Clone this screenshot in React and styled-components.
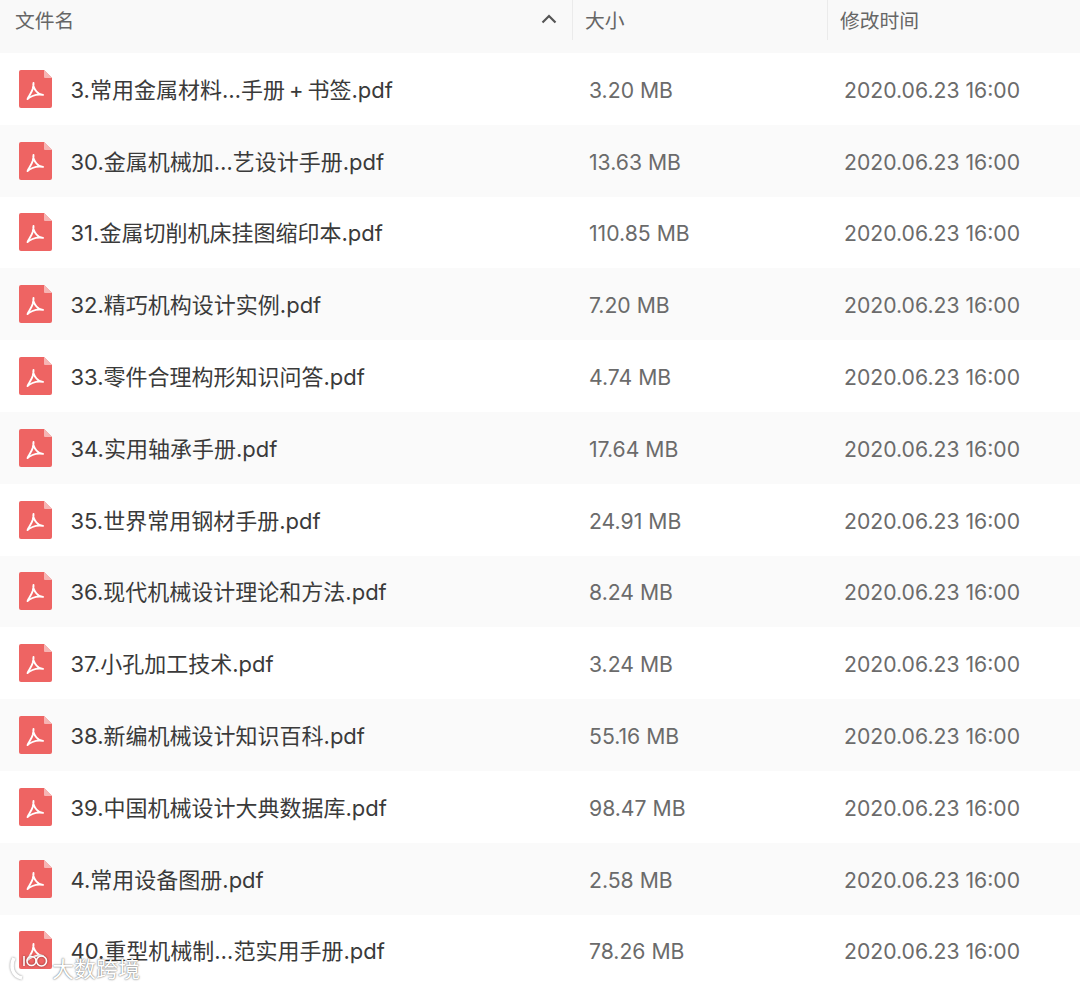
import React from "react"
import styled, { createGlobalStyle } from "styled-components"

const files = [
    ["3.常用金属材料…手册\u2009+\u2009书签.pdf", "3.20 MB"],
    ["30.金属机械加…艺设计手册.pdf", "13.63 MB"],
    ["31.金属切削机床挂图缩印本.pdf", "110.85 MB"],
    ["32.精巧机构设计实例.pdf", "7.20 MB"],
    ["33.零件合理构形知识问答.pdf", "4.74 MB"],
    ["34.实用轴承手册.pdf", "17.64 MB"],
    ["35.世界常用钢材手册.pdf", "24.91 MB"],
    ["36.现代机械设计理论和方法.pdf", "8.24 MB"],
    ["37.小孔加工技术.pdf", "3.24 MB"],
    ["38.新编机械设计知识百科.pdf", "55.16 MB"],
    ["39.中国机械设计大典数据库.pdf", "98.47 MB"],
    ["4.常用设备图册.pdf", "2.58 MB"],
    ["40.重型机械制…范实用手册.pdf", "78.26 MB"],
]

function PdfIcon() {
    return (
        <svg width="33" height="38" viewBox="0 0 33 38">
            <path d="M2 0H25L33 8V36a2 2 0 0 1-2 2H2a2 2 0 0 1-2-2V2a2 2 0 0 1 2-2Z" fill="#ee6463" />
            <path d="M25 0L33 8H26a1 1 0 0 1-1-1Z" fill="#f6b5b4" />
            <path
                d="M14.500 13c-.8 3 1 6 3 8.500 1.800 2.200 3.800 3.200 6.500 3.400-3.500-.8-8 0-10.500 1.100-2.200 1-3.800 1.800-5 3 1.200-2.800 4-6 5.200-10 .6-2.300 1.100-4.300.8-6Z"
                fill="none"
                stroke="#fff"
                strokeWidth="1.900"
                strokeLinejoin="round"
            />
        </svg>
    )
}

export default function App() {
    return (
        <>
            <GlobalStyle />
            <Page>
                <Header>
                    <HeaderCell>
                        文件名
                        <svg width="16" height="10" viewBox="0 0 16 10">
                            <path d="M1.500 8.500L8 2l6.500 6.500" fill="none" stroke="#555" strokeWidth="2.200" />
                        </svg>
                    </HeaderCell>
                    <HeaderCell $divided>大小</HeaderCell>
                    <HeaderCell $divided>修改时间</HeaderCell>
                </Header>
                {files.map(([name, size], i) => (
                    <Row key={name} $alt={i % 2 === 1}>
                        <NameCell>
                            <PdfIcon />
                            <FileName>{name}</FileName>
                        </NameCell>
                        <Meta>{size}</Meta>
                        <Meta>2020.06.23 16:00</Meta>
                    </Row>
                ))}
                <Watermark>
                    <WatermarkLogo width="44" height="32" viewBox="0 0 44 32">
                        <path d="M8 7C4 15 6 25 16 27" strokeWidth="3.600" />
                        <path d="M18 5V15" strokeWidth="1.600" />
                        <circle cx="25.500" cy="10" r="4.500" strokeWidth="1.600" />
                        <circle cx="35.500" cy="10" r="5" strokeWidth="1.600" />
                    </WatermarkLogo>
                    <WatermarkText>大数跨境</WatermarkText>
                </Watermark>
            </Page>
        </>
    )
}

const GlobalStyle = createGlobalStyle`
    html, body {
        margin: 0;
        padding: 0;
        background: #fff;
    }
`
const Page = styled.div`
    width: 1080px;
    height: 988px;
    overflow: hidden;
    position: relative;
    font-family: "Inter", "Noto Sans CJK SC", sans-serif;
`
const Header = styled.div`
    height: 53px;
    display: grid;
    grid-template-columns: 572px 255px 1fr;
    background: #f9f9f9;
`
const HeaderCell = styled.div`
    height: 40px;
    box-sizing: border-box;
    padding: 0 15px 2px ${(props) => (props.$divided ? "12px" : "15px")};
    display: flex;
    align-items: center;
    justify-content: space-between;
    font-size: 19.8px;
    color: #666666;
    border-left: ${(props) => (props.$divided ? "1px solid #ebebeb" : "none")};
`
const Row = styled.div`
    height: 71.8px;
    display: grid;
    grid-template-columns: 572px 255px 1fr;
    align-items: center;
    background: ${(props) => (props.$alt ? "#fafafa" : "#ffffff")};
`
const NameCell = styled.div`
    display: flex;
    align-items: center;
    gap: 18.500px;
    padding-left: 19px;
`
const FileName = styled.span`
    padding-bottom: 2px;
    font-size: 22px;
    color: #3a3a3a;
`
const Meta = styled.span`
    padding: 2px 0 0 17px;
    font-size: 21.2px;
    color: #6b6b6b;
`
const Watermark = styled.div`
    position: absolute;
    left: 6px;
    top: 951px;
    display: flex;
    align-items: center;
    gap: 2px;
`
const WatermarkLogo = styled.svg`
    fill: none;
    stroke: #ffffff;
    filter: drop-shadow(0 0 1px rgba(0, 0, 0, 0.45));
`
const WatermarkText = styled.span`
    font-size: 22px;
    color: #ffffff;
    text-shadow: 0 0 2px rgba(0, 0, 0, 0.55), 0 0 1px rgba(0, 0, 0, 0.3);
`
